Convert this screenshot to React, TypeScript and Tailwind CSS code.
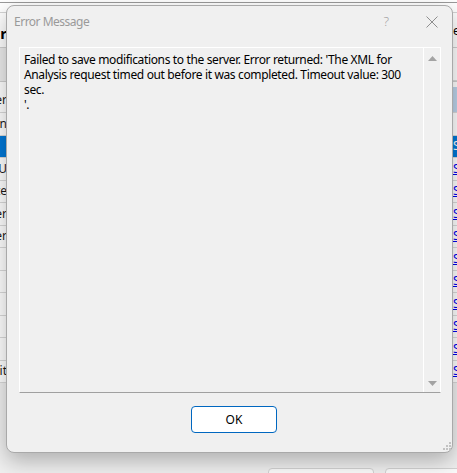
import React from "react";

const font = { fontFamily: '"Noto Sans", "Open Sans", sans-serif' };

type Row = { h: string; left?: string; leftBg?: string; right?: React.ReactNode; rightBg?: string; line?: boolean; extra?: string };

function BgRow({ h, left, leftBg, right, rightBg, line = true, extra = "" }: Row) {
  return (
    <div className={`flex w-full ${h} ${line ? "border-b border-[#dadada]" : ""}`}>
      <div className={`w-[7px] overflow-hidden flex justify-end items-center whitespace-nowrap text-[12px] text-[#1a1a1a] ${leftBg ?? "bg-white"} ${extra}`}>
        {left}
      </div>
      <div className="flex-1 bg-white" />
      <div className={`w-[5px] overflow-hidden flex items-center whitespace-nowrap text-[12px] ${rightBg ?? "bg-white"} ${extra}`}>
        {right}
      </div>
    </div>
  );
}

const Link = () => <span className="text-[#0000ee] underline pl-px">S</span>;

export default function App() {
  return (
    <div className="relative w-[457px] h-[473px] overflow-hidden bg-[#f0f0f0]" style={font}>
      {/* background window */}
      <div className="flex flex-col">
        <div className="h-[2px] bg-white" />
        <div className="h-px bg-[#9a9a9a]" />
        <div className="h-[10px] bg-white border-b border-[#d4d4d4]" />
        <div className="flex h-[35px] border-b border-[#d0d0d0]">
          <div className="w-[7px] bg-white flex justify-end items-end pb-[6px] overflow-hidden">
            <span className="text-[15px] font-bold text-black leading-none">r</span>
          </div>
          <div className="flex-1 bg-white" />
          <div className="w-[5px] bg-white flex items-start pt-[9px] overflow-hidden text-[12px] text-black pl-px">e</div>
        </div>
        <div className="flex h-[34px] border-b border-[#cfcfcf]">
          <div className="w-[7px] bg-[#ececec]" />
          <div className="flex-1 bg-white" />
          <div className="w-[5px] bg-white border-b border-[#dadada]" />
        </div>
        <div className="flex h-[31px] border-b border-[#dadada]">
          <div className="w-[7px] overflow-hidden flex justify-end items-center pt-[5px] whitespace-nowrap text-[12px] text-[#1a1a1a] bg-white">er</div>
          <div className="flex-1 bg-white" />
          <div className="w-[5px] flex flex-col">
            <div className="h-[5px] bg-white" />
            <div className="flex-1 bg-[#bcd3ea]" />
          </div>
        </div>
        <BgRow h="h-[22.5px]" left="in" />
        <BgRow h="h-[22.5px]" leftBg="bg-[#0078d7]" rightBg="bg-[#0078d7]" right={<span className="text-white pl-px">S</span>} />
        <BgRow h="h-[22.5px]" left="U" right={<Link />} />
        <BgRow h="h-[22.5px]" left="te" right={<Link />} />
        <BgRow h="h-[22.5px]" left="er" right={<Link />} />
        <BgRow h="h-[22.5px]" left="er" right={<Link />} />
        <BgRow h="h-[22.5px]" right={<Link />} />
        <BgRow h="h-[22.5px]" right={<Link />} />
        <BgRow h="h-[22.5px]" right={<Link />} />
        <BgRow h="h-[22.5px]" right={<Link />} />
        <BgRow h="h-[22.5px]" right={<Link />} />
        <BgRow h="h-[22.5px]" left="it" right={<Link />} />
        <div className="h-[85px]" />
        <div className="flex gap-[11px] pl-[268px]">
          <div className="w-[106px] h-[24px] shrink-0 bg-[#fbfbfb] border border-[#d2d2d2] rounded-[4px]" />
          <div className="w-[100px] h-[24px] shrink-0 bg-[#fbfbfb] border border-[#d2d2d2] rounded-[4px]" />
        </div>
      </div>

      {/* dialog */}
      <div className="absolute left-[6px] top-[5px] w-[447px] h-[448px] rounded-[8px] border border-[#a9a9a9] bg-[#f0f0f0] shadow-[0_8px_22px_rgba(0,0,0,0.28)] flex flex-col">
        <div className="h-[31px] flex items-center pl-[7px] pr-[14px] shrink-0">
          <span className="text-[12px] text-[#9a9a9a] flex-1 pt-px tracking-[-0.5px]">Error Message</span>
          <span className="text-[13px] text-[#a0a0a0] mr-[37px] font-light">?</span>
          <svg width="12" height="12" viewBox="0 0 12 12" className="mt-px">
            <path d="M0.5 0.5 L11.5 11.5 M11.5 0.5 L0.5 11.5" stroke="#8e8e8e" strokeWidth="1" />
          </svg>
        </div>
        <div className="mt-[10px] ml-[12px] w-[422px] h-[346px] border border-white border-b-[#a0a0a0] flex">
          <div className="flex-1 pl-[4px] pt-[4px] text-[12px] leading-[15px] text-black whitespace-nowrap tracking-[-0.36px]">
            Failed to save modifications to the server. Error returned: 'The XML for
            <br />
            Analysis request timed out before it was completed. Timeout value: 300
            <br />
            sec.
            <br />
            '.
          </div>
          <div className="w-[17px] border-l border-white flex flex-col items-center justify-between pt-[8px] pb-[6px]">
            <svg width="9" height="5" viewBox="0 0 9 5">
              <polygon points="4.5,0 9,5 0,5" fill="#a3a3a3" />
            </svg>
            <svg width="9" height="5" viewBox="0 0 9 5">
              <polygon points="0,0 9,0 4.5,5" fill="#a3a3a3" />
            </svg>
          </div>
        </div>
        <div className="mt-[13px] flex justify-center pl-[9px]">
          <button className="w-[86px] h-[27px] bg-white border border-[#0067c0] rounded-[4px] text-[12px] text-black flex items-center justify-center">
            OK
          </button>
        </div>
        <svg width="8" height="8" viewBox="0 0 8 8" className="absolute right-[1px] bottom-[2px]">
          <rect x="6" y="0" width="2" height="2" fill="#c2c2c2" />
          <rect x="3" y="3" width="2" height="2" fill="#c2c2c2" />
          <rect x="6" y="3" width="2" height="2" fill="#c2c2c2" />
          <rect x="0" y="6" width="2" height="2" fill="#c2c2c2" />
          <rect x="3" y="6" width="2" height="2" fill="#c2c2c2" />
          <rect x="6" y="6" width="2" height="2" fill="#c2c2c2" />
        </svg>
      </div>
    </div>
  );
}
